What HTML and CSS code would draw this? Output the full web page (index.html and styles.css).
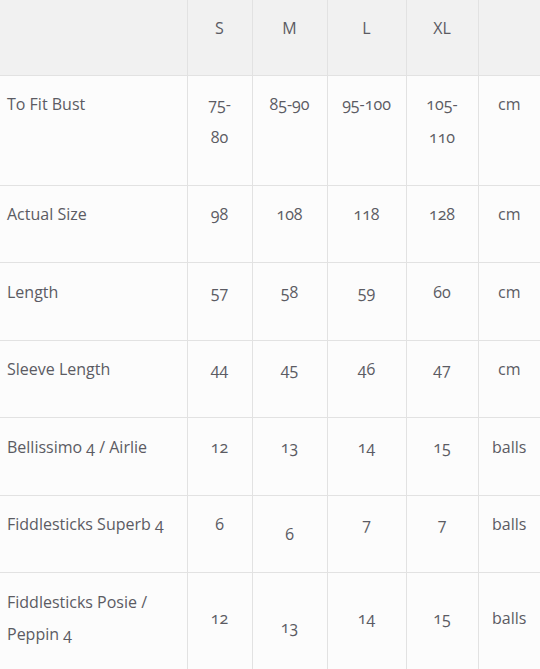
FILE: index.html
```html
<!DOCTYPE html>
<html lang="en">
<head>
<meta charset="utf-8">
<title>Size chart</title>
<link rel="stylesheet" href="styles.css">
</head>
<body>
<table class="size-chart">
  <colgroup>
    <col class="c-name">
    <col class="c-s">
    <col class="c-m">
    <col class="c-l">
    <col class="c-xl">
    <col class="c-unit">
  </colgroup>
  <thead>
    <tr>
      <th></th>
      <th>S</th>
      <th>M</th>
      <th>L</th>
      <th>XL</th>
      <th></th>
    </tr>
  </thead>
  <tbody>
    <tr>
      <td>To Fit Bust</td>
      <td>75-80</td>
      <td>85-90</td>
      <td>95-100</td>
      <td>105-110</td>
      <td>cm</td>
    </tr>
    <tr>
      <td>Actual Size</td>
      <td>98</td>
      <td>108</td>
      <td>118</td>
      <td>128</td>
      <td>cm</td>
    </tr>
    <tr>
      <td>Length</td>
      <td>57</td>
      <td>58</td>
      <td>59</td>
      <td>60</td>
      <td>cm</td>
    </tr>
    <tr>
      <td>Sleeve Length</td>
      <td>44</td>
      <td>45</td>
      <td>46</td>
      <td>47</td>
      <td>cm</td>
    </tr>
    <tr>
      <td>Bellissimo 4 / Airlie</td>
      <td>12</td>
      <td>13</td>
      <td>14</td>
      <td>15</td>
      <td>balls</td>
    </tr>
    <tr>
      <td>Fiddlesticks Superb 4</td>
      <td>6</td>
      <td class="shift-a">6</td>
      <td>7</td>
      <td>7</td>
      <td>balls</td>
    </tr>
    <tr class="last">
      <td>Fiddlesticks Posie / Peppin 4</td>
      <td class="mid">12</td>
      <td class="mid-low">13</td>
      <td class="mid">14</td>
      <td class="mid">15</td>
      <td class="mid">balls</td>
    </tr>
  </tbody>
</table>
</body>
</html>
```
FILE: styles.css
```css
html, body {
  margin: 0;
  padding: 0;
  background: #fcfcfc;
}

.size-chart {
  width: 540px;
  table-layout: fixed;
  border-collapse: collapse;
  border-style: hidden;
  font-family: "Open Sans", "Liberation Sans", sans-serif;
  font-size: 16px;
  line-height: 32.5px;
  font-variant-numeric: oldstyle-nums;
  color: #5b5b63;
}

.c-name { width: 187px; }
.c-s { width: 65px; }
.c-m { width: 75px; }
.c-l { width: 79px; }
.c-xl { width: 72px; }
.c-unit { width: 62px; }

.size-chart th,
.size-chart td {
  border: 1px solid #e2e2e2;
  vertical-align: top;
  text-align: center;
  padding: 12.5px 12px 31.5px;
  font-weight: normal;
}

.size-chart th {
  background: #f1f1f1;
  padding: 11.5px 12px 30.5px;
}

.size-chart td {
  background: #fcfcfc;
}

.size-chart td:first-child {
  text-align: left;
  padding-left: 7px;
  padding-right: 7px;
}

.size-chart td.shift-a {
  padding-top: 22.5px;
  padding-bottom: 21px;
}

.size-chart td.mid {
  padding-top: 28.5px;
  padding-bottom: 0;
}

.size-chart td.mid-low {
  padding-top: 37.5px;
  padding-bottom: 0;
}
```
